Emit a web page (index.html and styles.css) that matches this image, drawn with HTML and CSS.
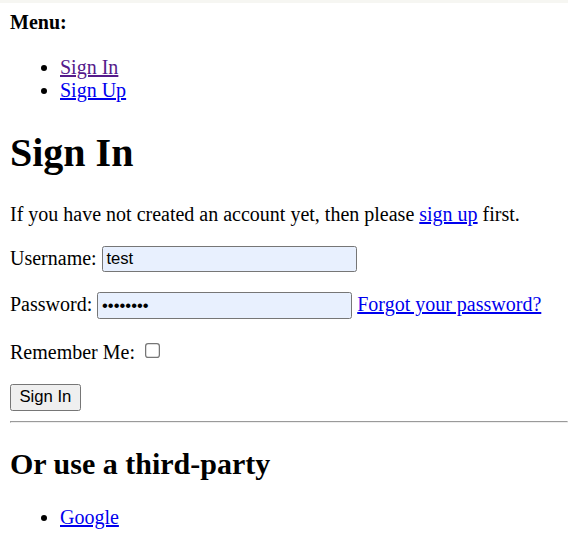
FILE: index.html
```html
<!DOCTYPE html>
<html lang="en">
<head>
  <meta charset="UTF-8" />
  <title>Sign In</title>
  <link rel="stylesheet" href="styles.css">
</head>
<body>

<div class="topbar"></div>

<div class="page">
  <nav class="menu">
    <p class="menu-title"><strong>Menu:</strong></p>
    <ul>
      <li><a class="visited" href="#">Sign In</a></li>
      <li><a href="#">Sign Up</a></li>
    </ul>
  </nav>

  <h1>Sign In</h1>

  <p>If you have not created an account yet, then please <a href="#">sign up</a> first.</p>

  <form>
    <p>
      <label for="username">Username:</label>
      <input class="field" type="text" id="username" value="test">
    </p>
    <p>
      <label for="password">Password:</label>
      <input class="field" type="password" id="password" value="password">
      <a href="#">Forgot your password?</a>
    </p>
    <p>
      <label for="remember">Remember Me:</label>
      <input type="checkbox" id="remember">
    </p>
    <button type="button">Sign In</button>
  </form>

  <hr>

  <h2>Or use a third-party</h2>
  <ul>
    <li><a href="#">Google</a></li>
  </ul>
</div>

</body>
</html>
```

FILE: styles.css
```css
body {
  margin: 0;
  font-family: 'Liberation Serif', serif;
  color: #000;
  background: #fff;
}

.topbar {
  height: 3px;
  background-color: #f6f6f2;
}

/* page is shown at 125% */
.page {
  zoom: 1.25;
  padding: 0 0 0 8px;
}

.menu-title {
  margin: 6px 0 18px;
}

a {
  color: #0000ee;
}

a.visited {
  color: #551a8b;
}

.field {
  box-sizing: border-box;
  width: 204px;
  padding: 2px 3px 1.8px;
  border: 1px solid #767676;
  border-radius: 2px;
  background-color: #e8f0fe;
}

hr {
  margin: 8px 0;
}
```
